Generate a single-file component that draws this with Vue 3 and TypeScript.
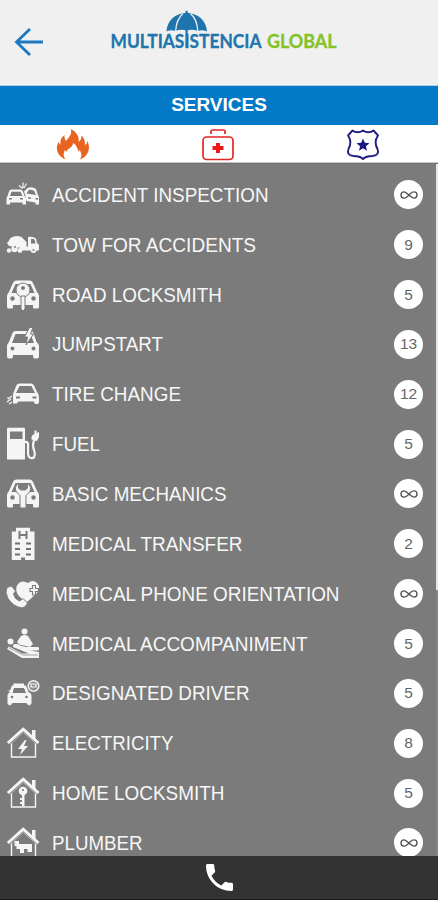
<script setup lang="ts">
interface Service {
  name: string
  icon: string
  count: string
  width: number
}

const services: Service[] = [
  { name: 'ACCIDENT INSPECTION', icon: 'crash', count: '∞', width: 216.5 },
  { name: 'TOW FOR ACCIDENTS', icon: 'tow', count: '9', width: 204 },
  { name: 'ROAD LOCKSMITH', icon: 'carkey', count: '5', width: 170 },
  { name: 'JUMPSTART', icon: 'jump', count: '13', width: 111 },
  { name: 'TIRE CHANGE', icon: 'tire', count: '12', width: 129 },
  { name: 'FUEL', icon: 'fuel', count: '5', width: 48 },
  { name: 'BASIC MECHANICS', icon: 'mechanic', count: '∞', width: 174.5 },
  { name: 'MEDICAL TRANSFER', icon: 'hospital', count: '2', width: 190.5 },
  { name: 'MEDICAL PHONE ORIENTATION', icon: 'heart', count: '∞', width: 287.5 },
  { name: 'MEDICAL ACCOMPANIMENT', icon: 'care', count: '5', width: 255.5 },
  { name: 'DESIGNATED DRIVER', icon: 'driver', count: '5', width: 197.5 },
  { name: 'ELECTRICITY', icon: 'electric', count: '8', width: 121.5 },
  { name: 'HOME LOCKSMITH', icon: 'homekey', count: '5', width: 172.5 },
  { name: 'PLUMBER', icon: 'plumber', count: '∞', width: 90.5 },
]

const isHouse = (icon: string): boolean => ['electric', 'homekey', 'plumber'].includes(icon)
const isBigCar = (icon: string): boolean => ['carkey', 'mechanic'].includes(icon)
</script>

<template>
  <div class="screen">
    <header class="topbar">
      <svg class="back" viewBox="0 0 30 28" width="30" height="28">
        <path d="M29 14H2.500M16 1L2.500 14L16 27" fill="none" stroke="#1b79c4" stroke-width="2.800" />
      </svg>
      <svg class="logo" viewBox="0 0 228 42" width="228" height="42">
        <path d="M55.500 21.500C56 11 64 3.300 75.600 2.800C87.200 3.300 95.500 11 96 21.500Q91 19.500 87 21Q81 18.800 75.600 20.500Q70 18.800 64.500 21Q60 19.500 55.500 21.500Z" fill="#1e74ad" />
        <path d="M72 3.500C67 8 65 14 64.700 21M79.500 3.500C84.500 8 86.500 14 86.700 21" fill="none" stroke="#f0f0f0" stroke-width="1.300" />
        <path d="M75.600 .8V38" stroke="#1e74ad" stroke-width="2.200" />
        <text x="-0.500" y="38" textLength="151" lengthAdjust="spacingAndGlyphs" class="wordmark blue">MULTIASISTENCIA</text>
        <text x="156" y="38" textLength="69.500" lengthAdjust="spacingAndGlyphs" class="wordmark green">GLOBAL</text>
      </svg>
    </header>

    <h1 class="title">SERVICES</h1>

    <nav class="tabs">
      <div class="tab">
        <svg viewBox="0 0 34 32" width="34" height="32">
          <path d="M15 0C22 4 23.500 9 22.500 13Q25.500 11 25.500 6.500C29 10 29 13 29 16Q31 15 31.500 12C35 20 32 27 24 30.500Q27 25 23.500 21L22.500 23Q21 16 17 14C17 19 11 19 10.500 23L9 21Q6 26 9.500 30.500C1 27-1 19 2.500 13L4.500 16C4 10 6 8 8.500 6Q8 9 10 12C13 8 16 6 15 0Z" fill="#e96421" />
        </svg>
      </div>
      <div class="tab">
        <svg viewBox="0 0 34 32" width="34" height="32">
          <g fill="none" stroke="#e42525" stroke-width="1.700"><rect x="2" y="8" width="30" height="22.500" rx="3.500" /><path d="M10 5V2.500Q10 1 11.500 1H22.500Q24 1 24 2.500V5" /></g>
          <path d="M15 14H19V17H22.500V21H19V24H15V21H11.500V17H15Z" fill="#ef1818" />
        </svg>
      </div>
      <div class="tab">
        <svg viewBox="0 0 34 32" width="34" height="32">
          <path d="M6.500 1.500Q11.500 5 17 1.500Q22.500 5 27.500 1.500L32 6.500Q27.500 13 31.500 20Q34 26 26.500 27Q20 27 17 30Q14 27 7.500 27Q0 26 2.500 20Q6.500 13 2 6.500Z" fill="none" stroke="#211f82" stroke-width="1.900" stroke-linejoin="round" />
          <path d="M17 9.500L18.800 13.800 23.500 14.200 19.900 17.200 21 21.800 17 19.300 13 21.800 14.100 17.200 10.500 14.200 15.200 13.800Z" fill="#171783" />
        </svg>
      </div>
    </nav>

    <main class="services">
      <ul class="list">
        <li v-for="s in services" :key="s.name" class="row">
          <svg class="icon" viewBox="0 0 34 34" width="34" height="34">
            <g v-if="s.icon === 'crash'">
              <path class="f" fill-rule="evenodd" d="M3 13.500Q3.500 11.500 5.500 11.500H14Q16 11.500 17 13.500L18.500 18Q20 19 20 21V26.500H16.500V24.500H4V26.500H.5V21Q.5 19 1.500 18ZM5.500 13.800L4 18H16.500L14.500 13.800Z" />
              <path class="f" fill-rule="evenodd" d="M18 13.500L21.500 10Q26 8 30 11L32 17Q33.500 19 33 22V26.500H29.500V24.500L20.500 23L19.500 18ZM20.500 15.500L30 17L28 12.800Q24.500 11 22.800 12Z" />
              <path class="l thin" d="M17 4.500V10M13 7.500L16.500 10.500M20.500 5.500L18 10" />
              <path class="c" d="M3 20H6V21.500H3ZM14 20H17V21.500H14ZM22 19L25 19.500V21L22 20.500ZM29.500 20H32V21.500H29.500Z" />
            </g>
            <g v-else-if="s.icon === 'tow'">
              <path class="f" d="M1 15Q3 13 4.500 10Q10 6.500 15.500 9L20.500 14V18.500H22V9Q27 8 30 10.500L31 15L33 17V22.500H15V20L3 18Z" />
              <path class="c" d="M25 11H28Q29 12 29.500 15.500H25Z" />
              <circle class="f" cx="8.500" cy="21" r="3.200" /><circle class="f" cx="3" cy="22.500" r="2.200" /><circle class="f" cx="14" cy="22.500" r="2.400" /><circle class="f" cx="27.500" cy="22" r="3" />
              <circle class="c" cx="9" cy="19" r="1" /><circle class="c" cx="27.500" cy="22" r="1" />
            </g>
            <g v-else-if="isBigCar(s.icon)">
              <path class="f" fill-rule="evenodd" d="M7 5Q8 2.500 10 2.500H24Q26 2.500 27 5L31 14Q33 16 33 18V29Q33 30.500 31 30.500H28Q27 30.500 27 29V27H7V29Q7 30.500 6 30.500H3Q1 30.500 1 29V18Q1 16 3 14ZM9.500 6L5.500 15H28.500L24.500 6Z" />
              <circle class="c" cx="6.500" cy="20.500" r="2.200" /><circle class="c" cx="27.500" cy="20.500" r="2.200" />
              <g v-if="s.icon === 'carkey'">
                <circle class="f edge" cx="17" cy="12" r="7" /><path class="f edge" d="M15 18H19V31L17 33L15 31Z" /><circle class="c" cx="17" cy="10" r="2" />
              </g>
              <path v-else class="f edge" d="M12.500 6Q7.500 10.500 10.500 15Q12.500 17 14 18.500V31H20V18.500Q21.500 17 23.500 15Q26.500 10.500 21.500 6V11L19.500 13H14.500L12.500 11Z" />
            </g>
            <g v-else-if="s.icon === 'jump'">
              <path class="f" fill-rule="evenodd" d="M6.500 6Q7.500 4 9.500 4H24.500Q26.500 4 27.500 6L30.500 15Q33 17 33 19V29.500Q33 31.500 31 31.500H28.500Q27 31.500 27 28H7Q7 31.500 5.500 31.500H3Q1 31.500 1 29.500V19Q1 17 3 15ZM9.500 7L6 16H28L24.500 7Z" />
              <circle class="c" cx="6.500" cy="21.500" r="2" /><circle class="c" cx="27.500" cy="21.500" r="2" />
              <path class="f edge" d="M23.500 .5L18.500 10H21.500L20 18L27.500 7H24.500L27 .5Z" />
            </g>
            <g v-else-if="s.icon === 'tire'">
              <path class="f" fill-rule="evenodd" d="M10.500 8Q11.500 6.500 13.500 6.500H25Q27 6.500 28 8.500L31 15Q33 17 33 20V25.500Q32 28 28.500 26.500L28 24.500H12L11 26.500H7V17ZM13.500 9L10 16H29L25.500 9Z" />
              <path class="c" d="M10 19.500H14V21.500H10ZM26.500 19.500H30.500V21.500H26.500Z" />
              <path class="l thin" d="M6 19L2 22M5 22L1 25M6 25L3 27M1 21H3" />
            </g>
            <g v-else-if="s.icon === 'fuel'">
              <path class="f" fill-rule="evenodd" d="M1 2Q1 .8 2 .8H18Q19 .8 19 2V32.500H1ZM4 4.500V12H16.500V4.500Z" />
              <path class="l" d="M18.500 15Q23 14 22 20L22 27Q23 32 27 31Q30 29 28 23Q26 18 28.500 12" stroke-width="2.200" /><path class="f" d="M28.500 3.500H30.500V6L33 5V10L31 14L25.500 12.500Q25 8 28.500 7Z" />
            </g>
            <g v-else-if="s.icon === 'hospital'">
              <path class="f" d="M10 .8H24V4.500H28.500V33H19V30.500H15V33H5.800V4.500H10Z" />
              <path d="M13.500 4V12M20.500 4V12M13.500 8H20.500" fill="none" stroke="#7b7b7b" stroke-width="2" />
              <path d="M9 16.500H14M20 16.500H25M9 22H14M20 22H25M9 27.500H14M20 27.500H25" fill="none" stroke="#707070" stroke-width="2" />
            </g>
            <g v-else-if="s.icon === 'heart'">
              <path class="f" d="M20 26L12 18Q9 13 11 8.500Q15 2 22 6Q27 2 31.500 6.500Q35 11 31 16Z" />
              <path class="f edge" d="M5.500 9L1 10.500Q-1.500 15 2 21.500Q7 29.500 16 31Q20.500 30 21.500 26L17 21.500L13.500 24Q8.500 22 7.500 17L9.500 14Z" />
              <path d="M24 14V11.500H26.500V8.500H29.500V11.500H32.500V14.500H29.500V18H26.500V14.500H24Z" fill="#f5f5f5" stroke="#7b7b7b" stroke-width="1.100" />
            </g>
            <g v-else-if="s.icon === 'care'">
              <circle class="f" cx="18.500" cy="4.500" r="3" /><path class="f" d="M15 9Q18.500 7 22 9L27 17L24 20L13 17.500L11 15Z" />
              <circle class="f" cx="4.500" cy="14.500" r="3" /><path class="f" d="M7 18Q10 16 14 18.500L20 20H32Q34 21 32.500 23.500H24L33 25V31H16L1 22L3 19.500L16 26.500H23L7 20Z" />
              <path d="M3 21L17 28H32" fill="none" stroke="#8e8e8e" stroke-width=".8" />
            </g>
            <g v-else-if="s.icon === 'driver'">
              <path class="f" fill-rule="evenodd" d="M7.500 9.500V7.500H18V9.500H20L22.500 16Q25.500 17 25.500 20V27.500Q23 31.500 20.500 27H6.500Q4 31.500 1.500 27.500V20Q1 18 4 16L1.500 14.500H4L6 9.500ZM8 12L6.500 17H20L18 12Z" />
              <circle class="c" cx="6" cy="21" r="1.300" /><circle class="c" cx="20.500" cy="21" r="1.300" />
              <circle cx="27.500" cy="10" r="5.300" fill="#8d8d8d" stroke="#f5f5f5" stroke-width="1.500" /><path class="l thin" d="M25 8H30V11H25Z" />
            </g>
            <g v-else-if="isHouse(s.icon)">
              <path class="f" d="M26 5V4H29.500V15L26 12Z" /><path class="l" d="M1.800 17L17.200 3.200L32.500 17" stroke-width="3" /><path class="l" d="M5.500 17V31H29.500V17" stroke-width="1.400" />
              <path d="M4 18.500L17.200 6.500L31 18.500" fill="none" stroke="#b5b5b5" stroke-width="1" />
              <path v-if="s.icon === 'electric'" class="f" d="M19 14L12 23H16L14 29L22 20H18L20.500 14Z" />
              <g v-else-if="s.icon === 'homekey'"><circle class="f" cx="17" cy="15" r="4.300" /><path class="f" d="M16 18H18.500V30H16V28H14V26H16V24H14V22H16Z" /><circle class="c" cx="17" cy="14" r="1.100" /></g>
              <path v-else class="f" d="M8.500 15H13V18H26V26H21.500V23H18V27H14V23H10.500V20H8.500Z" />
            </g>
          </svg>
          <svg class="label" height="26" width="300" viewBox="0 0 300 26">
            <text x="0" y="19.500" :textLength="s.width" lengthAdjust="spacingAndGlyphs">{{ s.name }}</text>
          </svg>
          <span class="badge">
            <svg v-if="s.count === '∞'" viewBox="0 0 18 10" width="18" height="10"><path d="M7.500 6.500Q5.500 8.300 4 8.100Q1 7.800 1 5Q1 1.900 4 1.900C7 1.900 10.500 8.100 14 8.100Q17 7.800 17 5Q17 1.900 14 1.900Q12 1.900 10.500 3.500L7.500 6.500" fill="none" stroke="#555" stroke-width="1.400" /></svg>
            <template v-else>{{ s.count }}</template>
          </span>
        </li>
      </ul>
      <div class="track"><div class="thumb"></div></div>
    </main>

    <footer class="callbar">
      <svg viewBox="3 3 18 18" width="27" height="27"><path fill="#fff" d="M6.620 10.790c1.440 2.830 3.760 5.140 6.590 6.590l2.200-2.200c.27-.27.67-.36 1.020-.24 1.120.37 2.330.57 3.570.57.550 0 1 .45 1 1V20c0 .550-.45 1-1 1-9.390 0-17-7.610-17-17 0-.55.450-1 1-1h3.500c.55 0 1 .45 1 1 0 1.250.2 2.450.57 3.570.11.350.030.740-.25 1.020l-2.200 2.200z" /></svg>
    </footer>
  </div>
</template>

<style>
body {
  margin: 0;
  overflow: hidden;
}
</style>

<style scoped>
.screen {
  width: 438px;
  height: 900px;
  display: flex;
  flex-direction: column;
  overflow: hidden;
  background: #7b7b7b;
  font-family: "Liberation Sans", Arial, sans-serif;
}
.topbar {
  height: 86px;
  flex: none;
  box-sizing: border-box;
  display: flex;
  align-items: flex-start;
  gap: 67px;
  padding: 10px 0 0 14px;
  background: #f0f0f0;
  border-bottom: 1px solid #b4cfe3;
}
.back {
  margin-top: 18px;
}
.logo {
  overflow: visible;
}
.wordmark {
  font: bold 18.500px Lato, sans-serif;
  stroke-width: 0.300px;
}
.blue {
  fill: #1e74ad;
  stroke: #1e74ad;
}
.green {
  fill: #85c226;
  stroke: #85c226;
}
.title {
  margin: 0;
  height: 39px;
  flex: none;
  background: #0479c8;
  color: #fff;
  font-size: 19px;
  line-height: 38px;
  text-align: center;
  font-weight: bold;
}
.tabs {
  height: 38px;
  flex: none;
  box-sizing: border-box;
  display: grid;
  grid-template-columns: repeat(3, 1fr);
  padding-right: 2px;
  background: #fff;
  border-bottom: 1px solid #c8c8c8;
}
.tab {
  display: flex;
  justify-content: center;
  align-items: flex-start;
  padding-top: 4px;
}
.services {
  flex: 1;
  min-height: 0;
  display: flex;
  overflow: hidden;
  border-top: 1px solid #707070;
}
.list {
  flex: 1;
  margin: 0;
  padding: 6px 0 0;
  list-style: none;
}
.row {
  height: 49.850px;
  display: flex;
  align-items: center;
  padding: 0 13px 0 6px;
}
.icon {
  flex: none;
  margin-right: 12px;
}
.label {
  flex: none;
  font-size: 19.500px;
  fill: #f7f7f7;
  overflow: visible;
}
.badge {
  width: 29px;
  height: 29px;
  flex: none;
  margin-left: auto;
  display: flex;
  align-items: center;
  justify-content: center;
  border-radius: 50%;
  background: #fff;
  color: #666;
  font-size: 15.500px;
}
.track {
  width: 2px;
  background: #858585;
}
.thumb {
  height: 426px;
  background: #e8e8e8;
}
.f {
  fill: #f5f5f5;
}
.c {
  fill: #7b7b7b;
}
.l {
  fill: none;
  stroke: #f5f5f5;
}
.thin {
  stroke-width: 1.200;
}
.edge {
  stroke: #7b7b7b;
  stroke-width: 1;
}
.callbar {
  height: 44px;
  flex: none;
  box-sizing: border-box;
  display: flex;
  justify-content: center;
  align-items: center;
  background: #333;
  border-bottom: 1px solid #1c1c1c;
}
</style>
